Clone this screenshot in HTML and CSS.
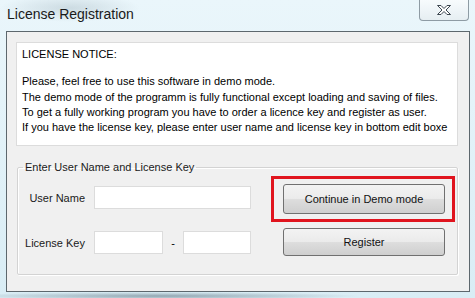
FILE: index.html
```html
<!DOCTYPE html>
<html lang="en">
<head>
    <meta charset="UTF-8">
    <title>License Registration</title>
    <link rel="stylesheet" href="styles.css">
</head>
<body>
    <div class="window">
        <div class="titlebar">
            <span class="title">License Registration</span>
            <button class="close" type="button">
                <svg width="16" height="12" viewBox="0 0 16 12">
                    <path d="M1.5 1.5 H5 L8 4.5 L11 1.5 H14.5 L10 6 L14.5 10.5 H11 L8 7.5 L5 10.5 H1.5 L6 6 Z" fill="#fff" stroke="#3c4650" stroke-width="1"/>
                </svg>
            </button>
        </div>
        <div class="client">
            <div class="notice">
                <p class="notice-head">LICENSE NOTICE:</p>
                <p>Please, feel free to use this software in demo mode.<br>
                The demo mode of the programm is fully functional except loading and saving of files.<br>
                To get a fully working program you have to order a licence key and register as user.<br>
                If you have the license key, please enter user name and license key in bottom edit boxe</p>
            </div>
            <fieldset class="group">
                <legend>Enter User Name and License Key</legend>
                <div class="group-body">
                    <div class="fields">
                        <div class="row">
                            <label for="userName">User Name</label>
                            <input type="text" id="userName" class="wide">
                        </div>
                        <div class="row">
                            <label for="key1">License Key</label>
                            <input type="text" id="key1" class="key">
                            <span class="dash">-</span>
                            <input type="text" id="key2" class="key key-end">
                        </div>
                    </div>
                    <div class="actions">
                        <div class="highlight">
                            <button type="button" class="btn">Continue in Demo mode</button>
                        </div>
                        <button type="button" class="btn btn-register">Register</button>
                    </div>
                </div>
            </fieldset>
        </div>
    </div>
</body>
</html>
```

FILE: styles.css
```css
* {
    box-sizing: border-box;
}
body {
    margin: 0;
    width: 475px;
    height: 298px;
    overflow: hidden;
    font-family: 'Liberation Sans', Arial, sans-serif;
    font-size: 11px;
    color: #000;
    background:
        radial-gradient(ellipse 70px 14px at 70px 8px, rgba(150, 170, 180, 0.35), transparent),
        radial-gradient(ellipse 200px 4px at 160px 296px, rgba(60, 80, 95, 0.45), transparent),
        linear-gradient(#eaf6fb, #d9edf5);
}
.titlebar {
    height: 31px;
    display: flex;
    justify-content: space-between;
    align-items: flex-start;
    padding-left: 7px;
}
.title {
    font-size: 14px;
    line-height: 29px;
    color: #1a1a1a;
}
.close {
    width: 50px;
    height: 21px;
    margin-right: 6px;
    padding: 0;
    border: 1px solid #8e9ba4;
    border-top: none;
    border-radius: 0 0 4px 4px;
    background: linear-gradient(#f7fbfd, #e6eef2);
    display: flex;
    justify-content: center;
    align-items: center;
}
.client {
    height: 261px;
    margin: 0 5px 0 6px;
    padding: 10px 11px 0 9px;
    border: 1px solid #5d676d;
    background: #f0f0f0;
}
.notice {
    height: 104px;
    padding: 4px 5px;
    border: 1px solid #dcdcdc;
    background: #fff;
    line-height: 15.3px;
}
.notice p {
    margin: 0;
}
.notice .notice-head {
    margin-bottom: 12px;
}
.group {
    margin: 15px 0 0 1px;
    padding: 0;
    width: 441px;
    border: 1px solid #d3d3d3;
    border-radius: 2px;
    box-shadow: inset 1px 1px 0 #fff, 1px 1px 0 #fff;
}
.group legend {
    margin-left: 5px;
    padding: 0 2px;
    line-height: 13px;
    color: #1a1a1a;
}
.group-body {
    display: flex;
    align-items: flex-start;
    padding: 2px 0 18px 1px;
}
.fields {
    margin-top: 10px;
    display: flex;
    flex-direction: column;
    gap: 22px;
}
.row {
    display: flex;
    align-items: center;
}
.row label {
    width: 66px;
    margin-right: 9px;
    text-align: right;
    color: #1a1a1a;
}
.row input {
    height: 23px;
    margin: 0;
    padding: 0 3px;
    border: 1px solid #dcdcdc;
    background: #fff;
    font: inherit;
}
.wide {
    width: 157px;
}
.key {
    width: 69px;
}
.key-end {
    width: 68px;
}
.dash {
    width: 20px;
    text-align: center;
}
.actions {
    margin-left: 20px;
    display: flex;
    flex-direction: column;
    align-items: flex-start;
}
.highlight {
    width: 184px;
    padding: 5px 7px 5px 9px;
    border: 3px solid #e0141e;
}
.btn {
    width: 162px;
    height: 30px;
    padding: 0;
    border: 1px solid #707070;
    border-radius: 3px;
    background: linear-gradient(#f3f3f3 0%, #ebebeb 48%, #dddddd 52%, #cfcfcf 100%);
    font: inherit;
    color: #111;
}
.btn-register {
    height: 28px;
    margin: 6px 0 0 12px;
}
```
